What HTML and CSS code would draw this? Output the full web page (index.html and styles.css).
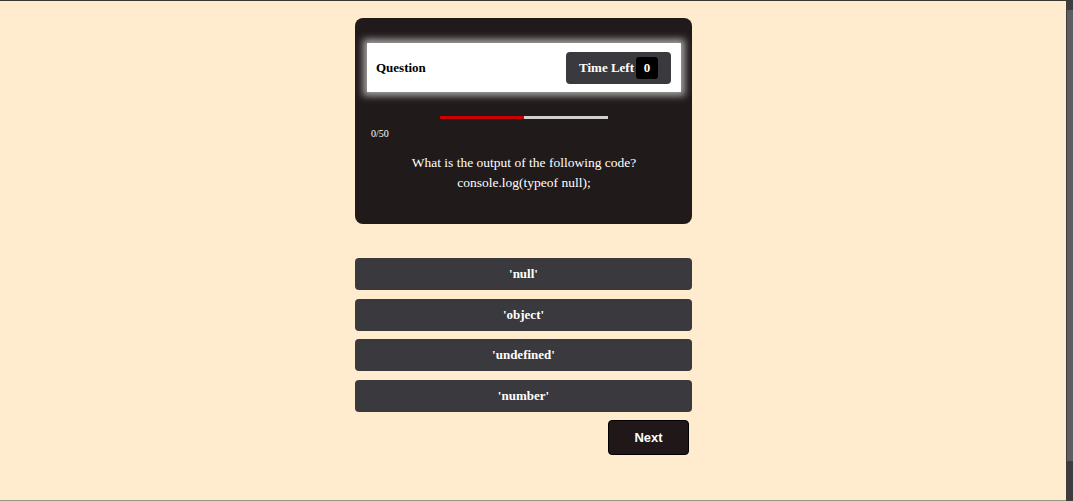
FILE: index.html
```html
<!DOCTYPE html>
<html lang="en">
<head>
<meta charset="utf-8">
<title>Quiz</title>
<link rel="stylesheet" href="styles.css">
</head>
<body>
<div class="page">
  <main class="main">
    <section class="card">
      <div class="header">
        <span class="title">Question</span>
        <div class="timer">
          <span class="timer-label">Time Left</span>
          <span class="timer-value">0</span>
        </div>
      </div>
      <div class="progress"><div class="progress-fill" style="width:50%"></div></div>
      <div class="count">0/50</div>
      <p class="question">What is the output of the following code?<br>console.log(typeof null);</p>
    </section>
    <div class="options">
      <button class="option">'null'</button>
      <button class="option">'object'</button>
      <button class="option">'undefined'</button>
      <button class="option">'number'</button>
    </div>
    <div class="actions">
      <button class="next">Next</button>
    </div>
  </main>
</div>
<div class="scrollbar"><div class="thumb"></div></div>
</body>
</html>
```
FILE: styles.css
```css
* { box-sizing: border-box; }
html, body { margin: 0; padding: 0; }
body {
  background: #ffebcd;
  height: 501px;
  overflow: hidden;
  display: flex;
  font-family: "Liberation Serif", "Times New Roman", serif;
}
.page {
  flex: 1;
  border-top: 1px solid #3b3833;
  border-bottom: 1px solid #9a9183;
  height: 501px;
}
.scrollbar {
  width: 7px;
  background: #3d3d3d;
  padding: 10px 0 40px 1px;
}
.thumb { height: 100%; background: #5e5e5e; }
.main {
  width: 1047px;
  display: flex;
  flex-direction: column;
  align-items: center;
  padding-top: 17px;
}
.card {
  width: 337px;
  height: 206px;
  background: #211a1b;
  border-radius: 8px;
  padding: 25px 11px 0 12px;
}
.header {
  height: 49px;
  background: #fff;
  box-shadow: 0 0 7px 4px rgba(205, 205, 205, 0.75);
  display: flex;
  align-items: center;
  justify-content: space-between;
  padding: 0 10px 0 9px;
}
.title { font-size: 13px; font-weight: bold; color: #000; }
.timer {
  width: 105px;
  height: 32px;
  background: #3a393d;
  border-radius: 4px;
  display: flex;
  align-items: center;
  justify-content: space-between;
  padding: 0 13px;
}
.timer-label { font-size: 13px; font-weight: bold; color: #fff; white-space: nowrap; }
.timer-value {
  flex: none;
  width: 22px; height: 22px;
  background: #000;
  color: #fff;
  border-radius: 3px;
  font-size: 13px; font-weight: bold;
  display: flex; align-items: center; justify-content: center;
}
.progress {
  width: 168px;
  height: 3px;
  margin: 24px auto 0;
  background: #d0d0d0;
}
.progress-fill { height: 100%; background: #cc0000; }
.count {
  margin: 9px 0 0 4px;
  font-size: 10px;
  color: #fff;
}
.question {
  margin: 14px 0 0;
  text-align: center;
  color: #fff;
  font-size: 13.5px;
  line-height: 20px;
}
.options {
  width: 337px;
  margin-top: 34px;
  display: flex;
  flex-direction: column;
  gap: 8.6px;
}
.option {
  height: 32px;
  border: none;
  border-radius: 4px;
  background: #3a393d;
  color: #fff;
  font-family: "Liberation Serif", "Times New Roman", serif;
  font-size: 13px;
  font-weight: bold;
  padding: 0;
}
.actions {
  width: 337px;
  display: flex;
  justify-content: flex-end;
  padding-right: 3px;
  margin-top: 8.5px;
}
.next {
  width: 81px;
  height: 35px;
  background: #201718;
  border: 1px solid #000;
  border-radius: 4px;
  color: #fff;
  font-family: "Liberation Sans", Arial, sans-serif;
  font-size: 13px;
  font-weight: bold;
}
```
